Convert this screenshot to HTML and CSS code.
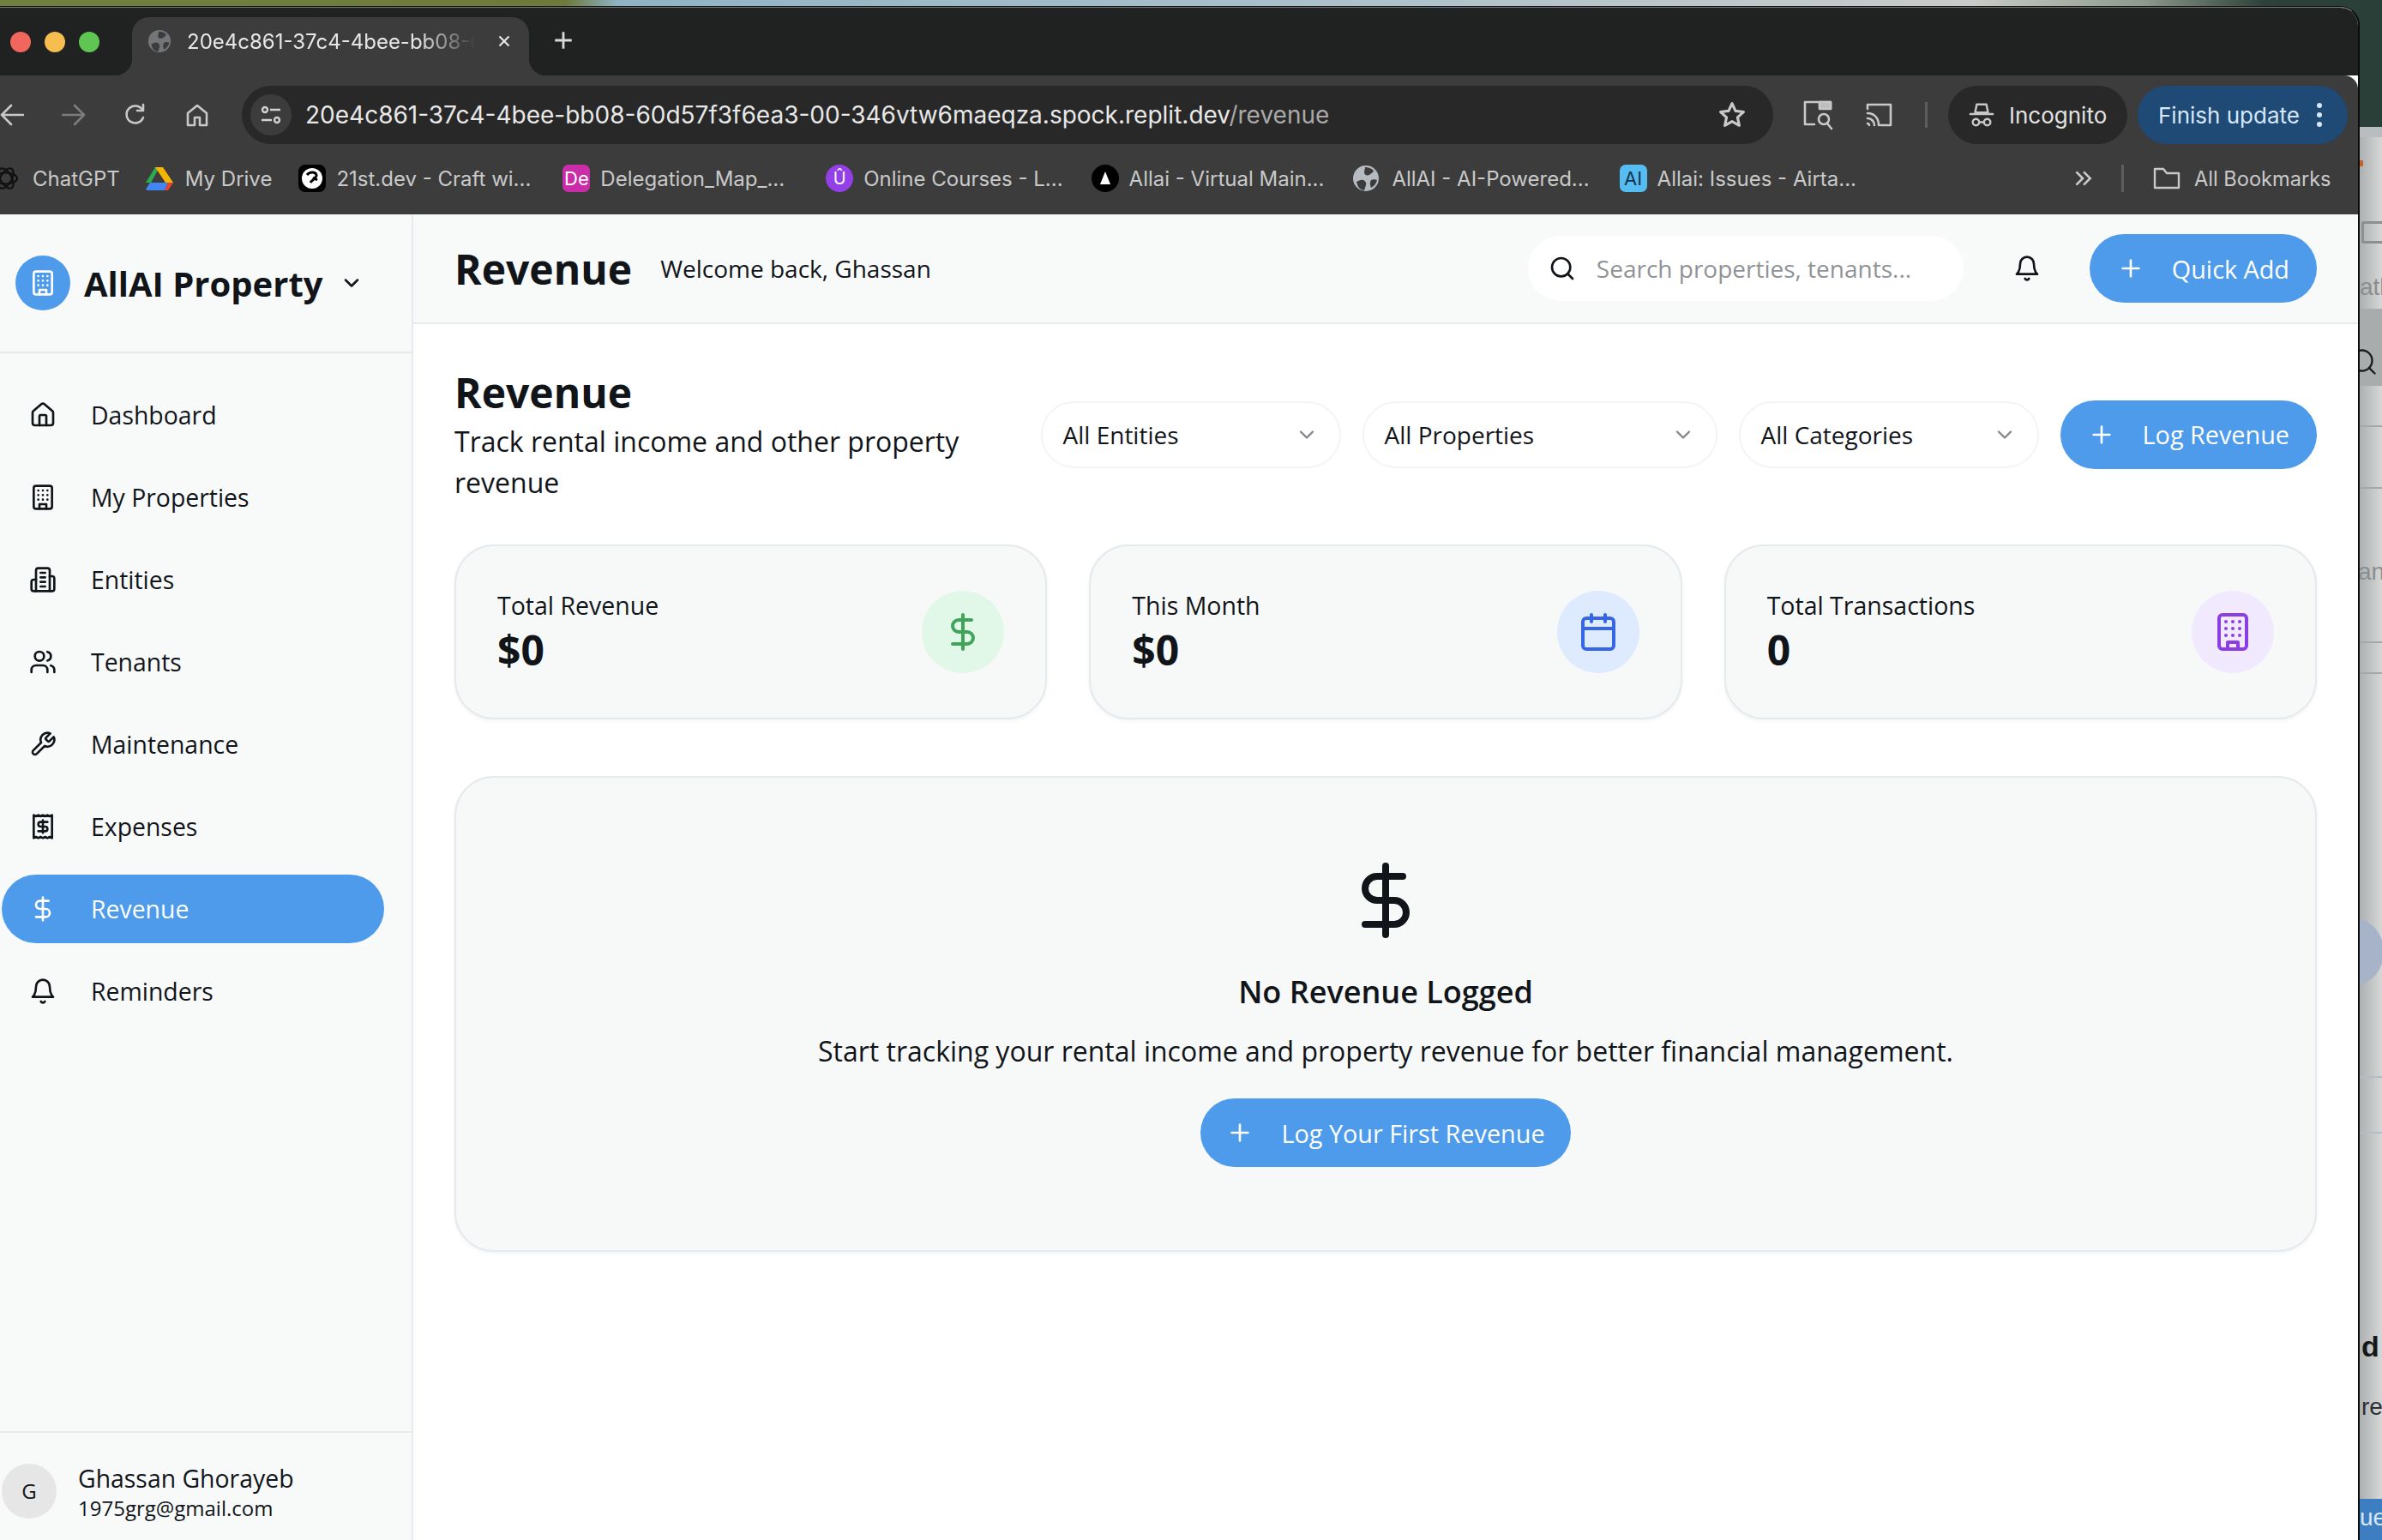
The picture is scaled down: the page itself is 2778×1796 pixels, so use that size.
FILE: index.html
```html
<!DOCTYPE html>
<html lang="en">
<head>
<meta charset="UTF-8" />
<title>Revenue - AllAI Property</title>
<link rel="stylesheet" href="styles.css">
</head>
<body>
  <svg class="sprites" width="0" height="0" aria-hidden="true">
    <defs>
      <symbol id="i-building" viewBox="0 0 24 24"><rect x="4" y="2" width="16" height="20" rx="2"/><path d="M9 22v-4h6v4M8 6h.01M16 6h.01M12 6h.01M12 10h.01M12 14h.01M16 10h.01M16 14h.01M8 10h.01M8 14h.01"/></symbol>
      <symbol id="i-house" viewBox="0 0 24 24"><path d="M15 21v-8a1 1 0 0 0-1-1h-4a1 1 0 0 0-1 1v8"/><path d="M3 10a2 2 0 0 1 .709-1.528l7-5.999a2 2 0 0 1 2.582 0l7 5.999A2 2 0 0 1 21 10v9a2 2 0 0 1-2 2H5a2 2 0 0 1-2-2z"/></symbol>
      <symbol id="i-entities" viewBox="0 0 24 24"><path d="M6 22V4a2 2 0 0 1 2-2h8a2 2 0 0 1 2 2v18Z"/><path d="M6 12H4a2 2 0 0 0-2 2v6a2 2 0 0 0 2 2h2M18 9h2a2 2 0 0 1 2 2v9a2 2 0 0 1-2 2h-2M10 6h4M10 10h4M10 14h4M10 18h4"/></symbol>
      <symbol id="i-users" viewBox="0 0 24 24"><path d="M16 21v-2a4 4 0 0 0-4-4H6a4 4 0 0 0-4 4v2"/><circle cx="9" cy="7" r="4"/><path d="M22 21v-2a4 4 0 0 0-3-3.87M16 3.13a4 4 0 0 1 0 7.75"/></symbol>
      <symbol id="i-wrench" viewBox="0 0 24 24"><path d="M14.7 6.3a1 1 0 0 0 0 1.4l1.6 1.6a1 1 0 0 0 1.4 0l3.77-3.77a6 6 0 0 1-7.94 7.94l-6.91 6.91a2.12 2.12 0 0 1-3-3l6.91-6.91a6 6 0 0 1 7.94-7.94l-3.76 3.76z"/></symbol>
      <symbol id="i-receipt" viewBox="0 0 24 24"><path d="M4 2v20l2-1 2 1 2-1 2 1 2-1 2 1 2-1 2 1V2l-2 1-2-1-2 1-2-1-2 1-2-1-2 1Z"/><path d="M16 8h-6a2 2 0 1 0 0 4h4a2 2 0 1 1 0 4H8M12 17.5v-11"/></symbol>
      <symbol id="i-dollar" viewBox="0 0 24 24"><path d="M12 2v20M17 5H9.5a3.5 3.5 0 0 0 0 7h5a3.5 3.5 0 0 1 0 7H6"/></symbol>
      <symbol id="i-bell" viewBox="0 0 24 24"><path d="M6 8a6 6 0 0 1 12 0c0 7 3 9 3 9H3s3-2 3-9"/><path d="M10.3 21a1.94 1.94 0 0 0 3.4 0"/></symbol>
      <symbol id="i-calendar" viewBox="0 0 24 24"><path d="M8 2v4M16 2v4M3 10h18"/><rect x="3" y="4" width="18" height="18" rx="2"/></symbol>
      <symbol id="i-chevron" viewBox="0 0 24 24"><path d="m6 9 6 6 6-6"/></symbol>
      <symbol id="i-plus" viewBox="0 0 24 24"><path d="M5 12h14M12 5v14"/></symbol>
      <symbol id="i-search" viewBox="0 0 24 24"><circle cx="11" cy="11" r="8"/><path d="m21 21-4.3-4.3"/></symbol>
      <symbol id="i-globe" viewBox="0 0 32 32"><circle cx="16" cy="16" r="15" fill="#b6bac1"/><path fill="#3c3c3c" d="M5 20c3-1 5-3 8-2 2 1 4 3 3 6-1 2-1 4-2 6-6-1-8-5-9-10ZM15 3c4 0 7 1 10 4-1 3-3 3-5 5-3 1-6 0-6-3 0-2 1-4 1-6ZM22 18c2-1 5-1 7 0-1 4-3 7-7 9-1-3-2-6 0-9Z"/></symbol>
    </defs>
  </svg>

  <div class="back-window">
    <span class="back-mark"></span>
    <span class="back-puzzle"></span>
    <span class="back-text back-ath">ath</span>
    <span class="back-band back-band-search"></span>
    <svg class="back-search ic"><use href="#i-search"/></svg>
    <span class="back-rule back-rule-1"></span>
    <span class="back-rule back-rule-2"></span>
    <span class="back-text back-an">an</span>
    <span class="back-rule back-rule-3"></span>
    <span class="back-rule back-rule-4"></span>
    <span class="back-dot"></span>
    <span class="back-rule back-rule-5"></span>
    <span class="back-rule back-rule-6"></span>
    <span class="back-text back-d">d</span>
    <span class="back-text back-re">re</span>
    <span class="back-btn">ue</span>
  </div>

  <div class="browser">
    <div class="tabstrip">
      <div class="traffic">
        <span class="light red"></span>
        <span class="light yellow"></span>
        <span class="light green"></span>
      </div>
      <div class="tab">
        <svg class="tab-favicon"><use href="#i-globe"/></svg>
        <span class="tab-title">20e4c861-37c4-4bee-bb08-60d57f3f6ea3</span>
        <svg class="tab-close" viewBox="0 0 24 24"><path d="M6 6l12 12M18 6 6 18"/></svg>
      </div>
      <svg class="tab-new" viewBox="0 0 24 24"><path d="M12 3v18M3 12h18"/></svg>
    </div>

    <div class="toolbar">
      <div class="nav-btns">
        <svg class="tb-ic tb-back" viewBox="0 0 28 28"><path d="M27 14H2M13 3 2 14l11 11"/></svg>
        <svg class="tb-ic tb-fwd" viewBox="0 0 28 28"><path d="M1 14h25M15 3l11 11-11 11"/></svg>
        <svg class="tb-ic tb-reload" viewBox="0 0 28 28"><path d="M23 17a10 10 0 1 1-1-9"/><path d="M23 2v7h-7"/></svg>
        <svg class="tb-ic tb-home" viewBox="0 0 28 28"><path d="M3 26V12L14 3l11 9v14h-8v-9h-6v9Z"/></svg>
      </div>
      <div class="omnibox">
        <span class="site-chip">
          <svg viewBox="0 0 28 28"><circle cx="7" cy="8" r="3"/><path d="M13 8h12M3 20h12"/><circle cx="21" cy="20" r="3"/></svg>
        </span>
        <span class="url">20e4c861-37c4-4bee-bb08-60d57f3f6ea3-00-346vtw6maeqza.spock.replit.dev<span class="url-path">/revenue</span></span>
        <svg class="tb-ic tb-star" viewBox="0 0 28 28"><path d="m14 3 3.3 7.2 7.7.9-5.7 5.3 1.6 7.7-6.9-3.9-6.9 3.9 1.6-7.7L3 11.1l7.7-.9Z"/></svg>
      </div>
      <svg class="tb-ic tb-lens" viewBox="0 0 36 36"><path d="M14 29H3V3h30v8"/><path d="M20 3h13v8H20Z" fill="#bdbdbd"/><circle cx="25" cy="23" r="6"/><path d="m29 28 5 6"/></svg>
      <svg class="tb-ic tb-cast" viewBox="0 0 32 32"><path d="M3 9V4h27v24H18"/><path d="M3 14c8 0 13 6 13 14M3 20c5 0 8 4 8 8M3 26c1 0 2 1 2 2"/></svg>
      <span class="tb-sep"></span>
      <div class="pill pill-incognito">
        <svg class="tb-ic tb-spy" viewBox="0 0 32 32"><path d="M8 13 10 3h12l2 10ZM2 15h28" /><circle cx="9" cy="25" r="4"/><circle cx="23" cy="25" r="4"/><path d="M13 25h6"/></svg>
        <span>Incognito</span>
      </div>
      <div class="pill pill-update">
        <span>Finish update</span>
        <span class="kebab"><i></i><i></i><i></i></span>
      </div>
    </div>

    <div class="bookmarks">
      <div class="bm bm-chatgpt">
        <svg class="bm-ic" viewBox="0 0 32 32"><g fill="none" stroke="#111" stroke-width="2.2"><ellipse cx="16" cy="16" rx="13" ry="6.5" transform="rotate(60 16 16)"/><ellipse cx="16" cy="16" rx="13" ry="6.5" transform="rotate(-60 16 16)"/><ellipse cx="16" cy="16" rx="13" ry="6.5"/></g></svg>
        <span>ChatGPT</span>
      </div>
      <div class="bm bm-drive">
        <svg class="bm-ic" viewBox="0 0 32 32"><path fill="#2da94f" d="M11 3h5l-10 18-6 0Z"/><path fill="#f5b400" d="M11 3h9l12 18h-9Z"/><path fill="#4285f4" d="M5 21h21l-4 9H2l-2-1Z"/><path fill="#e94335" d="M26 21h6l-6 9h-4Z"/></svg>
        <span>My Drive</span>
      </div>
      <div class="bm bm-21st">
        <svg class="bm-ic" viewBox="0 0 32 32"><rect width="32" height="32" rx="8" fill="#000"/><circle cx="16" cy="16" r="12" fill="#fff"/><path fill="none" stroke="#000" stroke-width="3" d="M10 12c3-4 10-4 11 0 1 3-5 6-7 9M17 15l5 3"/></svg>
        <span>21st.dev - Craft wi...</span>
      </div>
      <div class="bm bm-de">
        <span class="bm-badge badge-de">De</span>
        <span>Delegation_Map_...</span>
      </div>
      <div class="bm bm-online">
        <span class="bm-badge badge-u">Û</span>
        <span>Online Courses - L...</span>
      </div>
      <div class="bm bm-allai">
        <svg class="bm-ic" viewBox="0 0 32 32"><circle cx="16" cy="16" r="16" fill="#000"/><path fill="#fff" d="M16 8l6 15H10Z"/></svg>
        <span>Allai - Virtual Main...</span>
      </div>
      <div class="bm bm-globe">
        <svg class="bm-ic"><use href="#i-globe"/></svg>
        <span>AllAI - AI-Powered...</span>
      </div>
      <div class="bm bm-airtable">
        <span class="bm-badge badge-ai">AI</span>
        <span>Allai: Issues - Airta...</span>
      </div>
      <svg class="bm-more" viewBox="0 0 24 24"><path d="m5 5 7 7-7 7M13 5l7 7-7 7"/></svg>
      <span class="bm-sep"></span>
      <div class="bm bm-all">
        <svg class="bm-folder" viewBox="0 0 32 28"><path d="M2 25V3h10l4 5h14v17Z"/></svg>
        <span>All Bookmarks</span>
      </div>
    </div>

    <div class="app">
      <aside class="sidebar">
        <div class="brand">
          <span class="brand-logo"><svg class="ic"><use href="#i-building"/></svg></span>
          <span class="brand-name">AllAI Property</span>
          <svg class="ic brand-chevron"><use href="#i-chevron"/></svg>
        </div>
        <nav class="side-nav">
          <a class="side-link"><svg class="ic"><use href="#i-house"/></svg><span>Dashboard</span></a>
          <a class="side-link"><svg class="ic"><use href="#i-building"/></svg><span>My Properties</span></a>
          <a class="side-link"><svg class="ic"><use href="#i-entities"/></svg><span>Entities</span></a>
          <a class="side-link"><svg class="ic"><use href="#i-users"/></svg><span>Tenants</span></a>
          <a class="side-link"><svg class="ic"><use href="#i-wrench"/></svg><span>Maintenance</span></a>
          <a class="side-link"><svg class="ic"><use href="#i-receipt"/></svg><span>Expenses</span></a>
          <a class="side-link active"><svg class="ic"><use href="#i-dollar"/></svg><span>Revenue</span></a>
          <a class="side-link"><svg class="ic"><use href="#i-bell"/></svg><span>Reminders</span></a>
        </nav>
        <div class="user">
          <span class="avatar">G</span>
          <div class="user-info">
            <div class="user-name">Ghassan Ghorayeb</div>
            <div class="user-mail">1975grg@gmail.com</div>
          </div>
        </div>
      </aside>

      <div class="main">
        <header class="topbar">
          <h1 class="topbar-title">Revenue</h1>
          <span class="topbar-welcome">Welcome back, Ghassan</span>
          <div class="search">
            <svg class="ic"><use href="#i-search"/></svg>
            <span>Search properties, tenants...</span>
          </div>
          <svg class="ic topbar-bell"><use href="#i-bell"/></svg>
          <button class="btn btn-quick"><svg class="ic"><use href="#i-plus"/></svg>Quick Add</button>
        </header>

        <main class="content">
          <div class="page-head">
            <div class="page-intro">
              <h2>Revenue</h2>
              <p>Track rental income and other property revenue</p>
            </div>
            <div class="select sel-entities">All Entities<svg class="ic"><use href="#i-chevron"/></svg></div>
            <div class="select sel-properties">All Properties<svg class="ic"><use href="#i-chevron"/></svg></div>
            <div class="select sel-categories">All Categories<svg class="ic"><use href="#i-chevron"/></svg></div>
            <button class="btn btn-log"><svg class="ic"><use href="#i-plus"/></svg>Log Revenue</button>
          </div>

          <div class="stats">
            <div class="stat">
              <div>
                <div class="stat-label">Total Revenue</div>
                <div class="stat-value">$0</div>
              </div>
              <span class="stat-icon green"><svg class="ic"><use href="#i-dollar"/></svg></span>
            </div>
            <div class="stat">
              <div>
                <div class="stat-label">This Month</div>
                <div class="stat-value">$0</div>
              </div>
              <span class="stat-icon blue"><svg class="ic"><use href="#i-calendar"/></svg></span>
            </div>
            <div class="stat">
              <div>
                <div class="stat-label">Total Transactions</div>
                <div class="stat-value">0</div>
              </div>
              <span class="stat-icon purple"><svg class="ic"><use href="#i-building"/></svg></span>
            </div>
          </div>

          <section class="empty">
            <svg class="ic empty-icon"><use href="#i-dollar"/></svg>
            <h3>No Revenue Logged</h3>
            <p>Start tracking your rental income and property revenue for better financial management.</p>
            <button class="btn btn-first"><svg class="ic"><use href="#i-plus"/></svg>Log Your First Revenue</button>
          </section>
        </main>
      </div>
    </div>
  </div>
</body>
</html>
```

FILE: styles.css
```css
*, *::before, *::after {
  box-sizing: border-box;
}
html, body {
  margin: 0;
  padding: 0;
}
body {
  position: relative;
  width: 2778px;
  height: 1796px;
  overflow: hidden;
  font-family: "Open Sans", sans-serif;
  color: #11151a;
  background:
    linear-gradient(90deg, #71803f 0, #6d7a3c 660px, #8fb3c4 720px, #a9c0cb 1500px, #c9cbc9 2300px, #8d9a8c 2500px, #2c4139 2640px, #2a3f38 100%);
}
.sprites {
  position: absolute;
}
.ic {
  fill: none;
  stroke: currentColor;
  stroke-width: 2;
  stroke-linecap: round;
  stroke-linejoin: round;
  width: 32px;
  height: 32px;
  flex: none;
}

/* Window behind the browser */
.back-window {
  position: absolute;
  left: 2752px;
  top: 148px;
  width: 26px;
  height: 1648px;
  overflow: hidden;
  background: linear-gradient(90deg, #adb0b0, #d6d8d8);
  border-top: 12px solid #b9bdbf;
}
.back-window > * {
  position: absolute;
}
.back-mark {
  left: 0;
  top: 27px;
  width: 4px;
  height: 7px;
  background: #c8622a;
}
.back-puzzle {
  left: 2px;
  top: 98px;
  width: 30px;
  height: 26px;
  border: 3px solid #8d8f90;
  border-radius: 3px;
}
.back-text {
  font-family: "Liberation Sans", sans-serif;
  font-size: 28px;
  line-height: 32px;
  color: #8b8e90;
}
.back-ath { left: 0; top: 159px; }
.back-an { left: -2px; top: 491px; }
.back-d { left: 2px; top: 1394px; color: #15181b; font-weight: 700; font-size: 34px; }
.back-re { left: 2px; top: 1465px; color: #2b2e31; }
.back-band {
  left: 0;
  width: 26px;
}
.back-band-search {
  top: 200px;
  height: 90px;
  background: #a9acad;
}
.back-search {
  left: -14px;
  top: 244px;
  width: 36px;
  height: 36px;
  color: #1b1d1f;
  stroke-width: 1.6;
}
.back-rule {
  left: 0;
  width: 26px;
  height: 2px;
  background: #a3a8ab;
}
.back-rule-1 { top: 336px; }
.back-rule-2 { top: 408px; }
.back-rule-3 { top: 588px; }
.back-rule-4 { top: 624px; }
.back-rule-5 { top: 1095px; background: #b6bcc4; }
.back-rule-6 { top: 1160px; background: #b6bcc4; }
.back-dot {
  left: -36px;
  top: 912px;
  width: 64px;
  height: 76px;
  border-radius: 50%;
  background: #a6b3c9;
}
.back-btn {
  left: 0;
  top: 1588px;
  width: 26px;
  height: 48px;
  padding: 6px 0 0 0;
  font-family: "Liberation Sans", sans-serif;
  font-size: 28px;
  color: #d9e6f4;
  background: #3c7ec1;
}

/* Browser chrome */
.browser {
  position: absolute;
  left: 0;
  top: 8px;
  width: 2752px;
  height: 1788px;
  display: flex;
  flex-direction: column;
  overflow: hidden;
  background: #fff;
  border-right: 2px solid #0c0c0c;
  border-top: 1px solid #777;
  border-radius: 0 22px 0 0;
  box-shadow: 0 -1px 0 #111;
  font-family: Inter, sans-serif;
}
.tabstrip {
  height: 79px;
  flex: none;
  display: flex;
  align-items: flex-end;
  background: #202221;
}
.traffic {
  width: 154px;
  height: 68px;
  display: flex;
  gap: 16px;
  padding: 17px 0 0 12px;
}
.light {
  width: 24px;
  height: 24px;
  border-radius: 50%;
}
.light.red { background: #f1675e; }
.light.yellow { background: #f6bd4f; }
.light.green { background: #61c554; }
.tab {
  position: relative;
  width: 463px;
  height: 68px;
  display: flex;
  align-items: center;
  padding: 0 0 12px 18px;
  background: #3c3c3c;
  border-radius: 20px 20px 0 0;
  color: #e6e6e6;
  font-size: 24px;
}
.tab::before, .tab::after {
  content: "";
  position: absolute;
  bottom: 0;
  width: 20px;
  height: 20px;
}
.tab::before {
  left: -20px;
  background: radial-gradient(circle at 0 0, transparent 20px, #3c3c3c 20.5px);
}
.tab::after {
  right: -20px;
  background: radial-gradient(circle at 100% 0, transparent 20px, #3c3c3c 20.5px);
}
.tab-favicon {
  width: 28px;
  height: 28px;
  flex: none;
  opacity: 0.45;
}
.tab-title {
  width: 336px;
  margin-left: 18px;
  overflow: hidden;
  white-space: nowrap;
  -webkit-mask-image: linear-gradient(90deg, #000 270px, transparent 336px);
  mask-image: linear-gradient(90deg, #000 270px, transparent 336px);
}
.tab-close {
  width: 22px;
  height: 22px;
  margin-left: 23px;
  fill: none;
  stroke: #e6e6e6;
  stroke-width: 2.4;
}
.tab-new {
  width: 26px;
  height: 26px;
  margin: 0 0 28px 27px;
  fill: none;
  stroke: #d8d8d8;
  stroke-width: 2.6;
}

.toolbar {
  height: 80px;
  flex: none;
  display: flex;
  align-items: flex-end;
  background: #3c3c3c;
  color: #e2e2e2;
  border-radius: 0 16px 0 0;
}
.tb-ic {
  fill: none;
  stroke: #c8c8c8;
  stroke-width: 2.6;
  stroke-linecap: round;
  stroke-linejoin: round;
  flex: none;
}
.nav-btns {
  width: 282px;
  height: 68px;
  display: flex;
  align-items: center;
  gap: 44px;
}
.nav-btns svg {
  width: 28px;
  height: 28px;
}
.tb-fwd { stroke: #7c7c7c; }
.omnibox {
  width: 1786px;
  height: 68px;
  display: flex;
  align-items: center;
  background: #282828;
  border-radius: 34px;
  padding-left: 10px;
}
.site-chip {
  width: 48px;
  height: 48px;
  border-radius: 50%;
  background: #3c3c3c;
  display: flex;
  align-items: center;
  justify-content: center;
  flex: none;
}
.site-chip svg {
  width: 28px;
  height: 28px;
  fill: none;
  stroke: #d2d2d2;
  stroke-width: 2.4;
}
.url {
  margin-left: 16px;
  font-size: 28px;
  white-space: nowrap;
  color: #e8e8e8;
  flex: 1;
}
.url-path { color: #a9a9a9; }
.tb-star {
  width: 34px;
  height: 34px;
  margin-right: 31px;
}
.tb-lens {
  width: 36px;
  height: 36px;
  margin: 0 0 16px 34px;
}
.tb-cast {
  width: 32px;
  height: 32px;
  margin: 0 0 18px 37px;
}
.tb-sep {
  width: 3px;
  height: 30px;
  margin: 0 0 19px 38px;
  background: #5e5e5e;
}
.pill {
  height: 68px;
  display: flex;
  align-items: center;
  border-radius: 34px;
  font-size: 26px;
  flex: none;
}
.pill-incognito {
  width: 209px;
  margin-left: 24px;
  padding-left: 24px;
  gap: 17px;
  background: #282828;
}
.tb-spy {
  width: 30px;
  height: 30px;
}
.pill-update {
  width: 245px;
  margin-left: 12px;
  padding-left: 24px;
  background: #1f4a75;
  color: #d6e7fa;
}
.kebab {
  display: flex;
  flex-direction: column;
  gap: 5px;
  margin-left: 20px;
}
.kebab i {
  display: block;
  width: 6px;
  height: 6px;
  border-radius: 50%;
  background: #d6e7fa;
}

.bookmarks {
  position: relative;
  height: 82px;
  flex: none;
  display: flex;
  align-items: center;
  background: #3c3c3c;
  color: #c9c9c9;
  font-size: 24px;
  padding-bottom: 2px;
}
.bm {
  display: flex;
  align-items: center;
  gap: 12px;
  white-space: nowrap;
  flex: none;
}
.bm-ic, .bm-badge {
  width: 32px;
  height: 32px;
  flex: none;
}
.bm-badge {
  display: flex;
  align-items: center;
  justify-content: center;
  border-radius: 7px;
  font-size: 22px;
  line-height: 1;
}
.badge-de { background: #c92ea8; color: #fff; }
.badge-u { background: #9440e8; color: #fff; border-radius: 50%; font-size: 20px; }
.badge-ai { background: #56bdf2; color: #173349; }
.bm-chatgpt { margin-left: -9px; gap: 15px; }
.bm-drive { margin-left: 30px; gap: 14px; }
.bm-21st { margin-left: 31px; }
.bm-de { margin-left: 37px; }
.bm-online { margin-left: 48px; }
.bm-allai { margin-left: 33px; }
.bm-globe { margin-left: 33px; gap: 14px; }
.bm-airtable { margin-left: 35px; }
.bm-more {
  width: 26px;
  height: 26px;
  margin-left: 251px;
  fill: none;
  stroke: #c9c9c9;
  stroke-width: 2.4;
  flex: none;
}
.bm-sep {
  width: 3px;
  height: 32px;
  margin-left: 32px;
  background: #5e5e5e;
  flex: none;
}
.bm-all { margin-left: 34px; gap: 16px; font-size: 23.6px; }
.bm-folder {
  width: 32px;
  height: 28px;
  fill: none;
  stroke: #c9c9c9;
  stroke-width: 2.4;
  stroke-linejoin: round;
}

/* App */
.app {
  flex: 1;
  min-height: 0;
  display: flex;
  font-family: "Open Sans", sans-serif;
  color: #11151a;
}
.sidebar {
  width: 482px;
  flex: none;
  display: flex;
  flex-direction: column;
  background: #f8f9f9;
  border-right: 2px solid #e5eaee;
}
.brand {
  height: 162px;
  flex: none;
  display: flex;
  align-items: center;
  padding: 0 0 0 18px;
  border-bottom: 2px solid #e5eaee;
}
.brand-logo {
  width: 64px;
  height: 64px;
  border-radius: 50%;
  background: #4d9bea;
  display: flex;
  align-items: center;
  justify-content: center;
  color: #fff;
  flex: none;
}
.brand-name {
  margin-left: 16px;
  font-size: 40px;
  font-weight: 700;
  white-space: nowrap;
}
.brand-chevron {
  width: 28px;
  height: 28px;
  margin-left: 19px;
  stroke-width: 2.2;
}
.side-nav {
  flex: 1;
  display: flex;
  flex-direction: column;
  gap: 16px;
  padding: 32px 0 0 2px;
}
.side-link {
  width: 446px;
  height: 80px;
  display: flex;
  align-items: center;
  gap: 40px;
  padding-left: 32px;
  border-radius: 40px;
  font-size: 28.4px;
}
.side-link.active {
  background: #4d9bea;
  color: #fff;
}
.user {
  height: 127px;
  flex: none;
  display: flex;
  align-items: center;
  gap: 25px;
  padding: 10px 0 0 2px;
  border-top: 2px solid #e5eaee;
}
.avatar {
  width: 64px;
  height: 64px;
  border-radius: 50%;
  background: #e6e6e6;
  display: flex;
  align-items: center;
  justify-content: center;
  font-size: 24px;
  font-weight: 500;
  flex: none;
}
.user-info {
  margin-top: 4px;
}
.user-name {
  font-size: 28.4px;
  line-height: 36px;
}
.user-mail {
  font-size: 24px;
  line-height: 34px;
}

.main {
  flex: 1;
  min-width: 0;
  display: flex;
  flex-direction: column;
}
.topbar {
  height: 128px;
  flex: none;
  display: flex;
  align-items: center;
  padding: 0 48px;
  background: #f8f9f9;
  border-bottom: 2px solid #e5eaee;
}
.topbar-title {
  margin: 0;
  font-size: 48px;
  font-weight: 700;
}
.topbar-welcome {
  margin-left: 33px;
  font-size: 28px;
}
.search {
  width: 508px;
  height: 76px;
  margin-left: auto;
  display: flex;
  align-items: center;
  gap: 24px;
  padding-left: 24px;
  background: #fff;
  border-radius: 38px;
  font-size: 28px;
  color: #8f9398;
}
.search .ic {
  color: #11151a;
}
.topbar-bell {
  margin: 0 57px 0 58px;
}
.btn {
  display: flex;
  align-items: center;
  height: 80px;
  gap: 32px;
  padding: 0 32px;
  background: #4d9bea;
  color: #fff;
  border: none;
  border-radius: 40px;
  font-family: inherit;
  font-size: 28.8px;
  white-space: nowrap;
}
.content {
  padding: 48px 48px 0;
}
.page-head {
  display: flex;
  align-items: center;
  gap: 25px;
}
.page-intro {
  flex: 1;
  min-width: 0;
}
.page-intro h2 {
  margin: 0;
  font-size: 48px;
  line-height: 64px;
  font-weight: 700;
}
.page-intro p {
  margin: 1px 0 0;
  font-size: 32px;
  line-height: 48px;
}
.select {
  height: 78px;
  flex: none;
  display: flex;
  align-items: center;
  justify-content: space-between;
  padding: 0 24px;
  background: #fff;
  border: 2px solid #f3f4f5;
  border-radius: 39px;
  font-size: 28px;
}
.select .ic {
  width: 28px;
  height: 28px;
  color: #83878b;
}
.sel-entities { width: 350px; }
.sel-properties { width: 414px; }
.sel-categories { width: 350px; }
.btn-log { flex: none; }

.stats {
  display: grid;
  grid-template-columns: repeat(3, 1fr);
  gap: 49px;
  margin-top: 48px;
}
.stat {
  height: 204px;
  display: flex;
  align-items: center;
  justify-content: space-between;
  padding: 0 48px;
  background: #f7f9f9;
  border: 2px solid #e5eaee;
  border-radius: 46px;
  box-shadow: 0 2px 4px rgba(20, 40, 60, 0.05);
}
.stat-label {
  font-size: 28.5px;
  line-height: 42px;
}
.stat-value {
  font-size: 48px;
  font-weight: 700;
  line-height: 62px;
}
.stat-icon {
  width: 96px;
  height: 96px;
  border-radius: 50%;
  display: flex;
  align-items: center;
  justify-content: center;
}
.stat-icon .ic {
  width: 48px;
  height: 48px;
}
.stat-icon.green { background: #e1f8e8; color: #41a45a; }
.stat-icon.blue { background: #deeafd; color: #3567e4; }
.stat-icon.purple { background: #f1e9fe; color: #8b3fe3; }

.empty {
  margin-top: 66px;
  height: 555px;
  display: flex;
  flex-direction: column;
  align-items: center;
  padding-top: 95px;
  background: #f7f9f9;
  border: 2px solid #e5eaee;
  border-radius: 46px;
  box-shadow: 0 2px 4px rgba(20, 40, 60, 0.05);
}
.empty-icon {
  width: 96px;
  height: 96px;
}
.empty h3 {
  margin: 27px 0 0;
  font-size: 36px;
  line-height: 64px;
  font-weight: 600;
}
.empty p {
  margin: 13px 0 0;
  font-size: 32px;
  line-height: 48px;
}
.btn-first {
  margin-top: 31px;
  padding: 0 30px;
}
```
